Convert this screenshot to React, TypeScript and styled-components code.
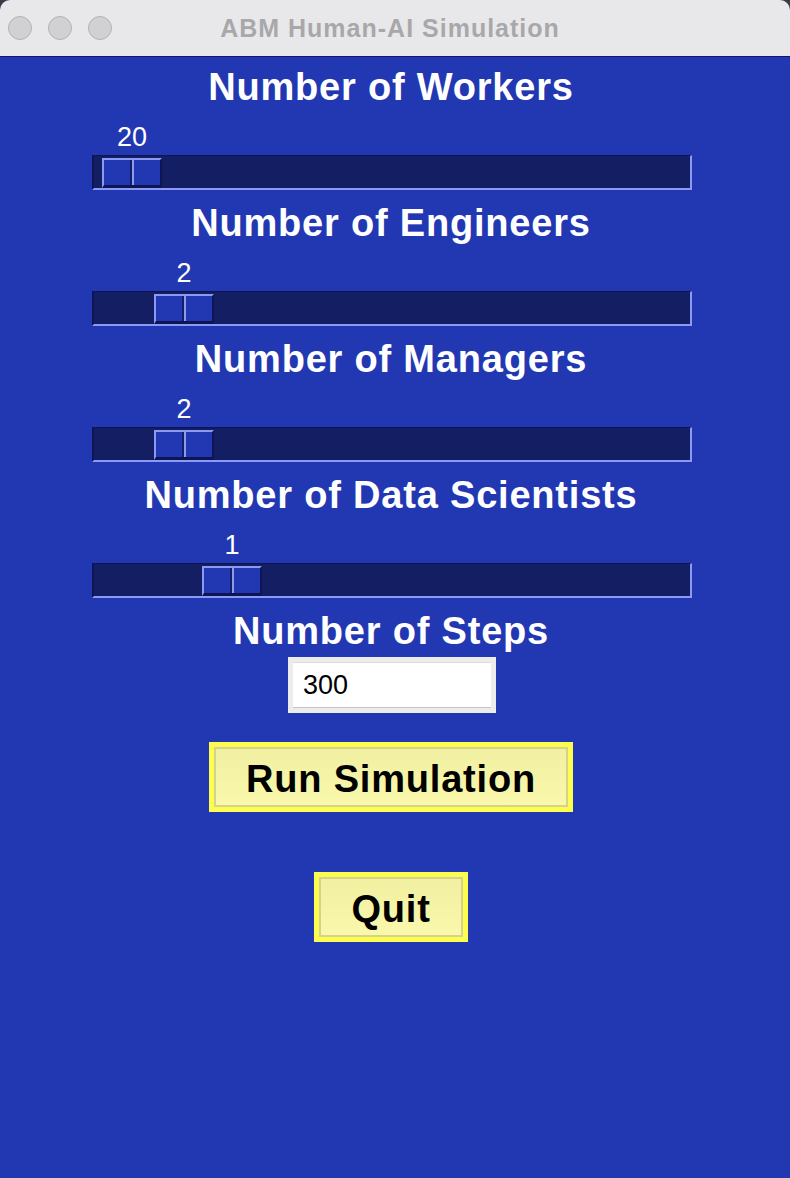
import React from "react";
import styled, { createGlobalStyle } from "styled-components";

const GlobalStyle = createGlobalStyle`
  html, body {
    margin: 0;
    padding: 0;
    background: #3c3c3e;
  }
  body {
    font-family: "Liberation Sans", Arial, sans-serif;
  }
  * { box-sizing: border-box; }
`;

const BLUE = "#2238b3";
const TRACK = "#131e63";
const DARK = "#0e1552";
const LIGHT = "#8b9bf4";

const Window = styled.div`
  display: flex;
  flex-direction: column;
  min-height: 1178px;
  background: ${BLUE};
  border-radius: 10px 10px 0 0;
  overflow: hidden;
`;

const TitleBar = styled.div`
  display: grid;
  grid-template-columns: 1fr auto 1fr;
  align-items: center;
  height: 57px;
  background: #e8e8ea;
  border-bottom: 1px solid #11186b;
`;

const Lights = styled.div`
  display: flex;
  gap: 16px;
  padding-left: 8px;
`;

const Light = styled.span`
  width: 24px;
  height: 24px;
  border-radius: 50%;
  background: #d1d1d3;
  border: 1px solid #b3b3b5;
`;

const WindowTitle = styled.div`
  font-family: "Liberation Sans", Arial, sans-serif;
  font-weight: bold;
  font-size: 25px;
  letter-spacing: 1px;
  color: #a8a8aa;
  margin-right: 10px;
`;

const Content = styled.div`
  display: flex;
  flex-direction: column;
  align-items: center;
  padding: 4px 8px 0 0;
`;

const SliderBlock = styled.section`
  display: flex;
  flex-direction: column;
  align-items: center;
  align-self: stretch;
  margin-bottom: 7px;
`;

const Heading = styled.h2`
  margin: 0;
  padding-top: 4px;
  font-family: "Liberation Sans", Arial, sans-serif;
  font-weight: bold;
  font-size: 38px;
  letter-spacing: 0.8px;
  line-height: 44px;
  color: #ffffff;
`;

const SliderGroup = styled.div`
  display: flex;
  flex-direction: column;
  align-self: flex-start;
  margin-left: 92px;
  width: 600px;
`;

const ValueLabel = styled.div<{ $offset: number }>`
  margin-top: 13px;
  margin-left: ${(p) => p.$offset + 2}px;
  width: 60px;
  height: 30px;
  line-height: 30px;
  text-align: center;
  font-family: "Liberation Sans", Arial, sans-serif;
  font-size: 27px;
  color: #ffffff;
`;

const Track = styled.div`
  margin-top: 3px;
  height: 35px;
  display: flex;
  align-items: flex-start;
  background: ${TRACK};
  border-top: 1px solid ${DARK};
  border-left: 2px solid ${DARK};
  border-bottom: 2px solid ${LIGHT};
  border-right: 2px solid ${LIGHT};
`;

const Thumb = styled.div<{ $offset: number }>`
  display: flex;
  margin-top: 2px;
  margin-left: ${(p) => p.$offset}px;
  width: 60px;
  height: 30px;
  border-top: 2px solid ${LIGHT};
  border-left: 2px solid ${LIGHT};
  border-right: 2px solid ${DARK};
  border-bottom: 3px solid ${DARK};
`;

const ThumbCell = styled.div<{ $second?: boolean }>`
  flex: 1;
  background: ${BLUE};
  ${(p) =>
    p.$second
      ? `border-left: 2px solid ${LIGHT};`
      : `border-right: 2px solid ${TRACK};`}
`;

const Entry = styled.div`
  margin-top: 4px;
  margin-left: 2px;
  width: 208px;
  height: 56px;
  padding: 5px;
  background: #ececec;
`;

const EntryInput = styled.input`
  display: block;
  width: 100%;
  height: 100%;
  margin: 0;
  padding: 0 0 0 10px;
  border: none;
  border-top: 1px solid #dcdcdc;
  border-bottom: 1px solid #c4c4c4;
  background: #ffffff;
  color: #000000;
  outline: none;
  font-family: "Liberation Sans", Arial, sans-serif;
  font-size: 27px;
`;

const ActionButton = styled.button<{ $gap: number }>`
  display: flex;
  align-items: center;
  justify-content: center;
  margin-top: ${(p) => p.$gap}px;
  height: 70px;
  padding: 4px 32px 0;
  border: 5px solid #fdfd4f;
  box-shadow: inset 0 0 0 2px #d5d28a;
  background: linear-gradient(#f1efa0, #f9f8ac);
  color: #000000;
  font-family: "Liberation Sans", Arial, sans-serif;
  font-weight: bold;
  font-size: 38px;
  letter-spacing: 0.8px;
  cursor: pointer;
`;

const sliders = [
  { label: "Number of Workers", value: 20, offset: 8 },
  { label: "Number of Engineers", value: 2, offset: 60 },
  { label: "Number of Managers", value: 2, offset: 60 },
  { label: "Number of Data Scientists", value: 1, offset: 108 },
];

export default function App() {
  return (
    <>
      <GlobalStyle />
      <Window>
        <TitleBar>
          <Lights>
            <Light />
            <Light />
            <Light />
          </Lights>
          <WindowTitle>ABM Human-AI Simulation</WindowTitle>
          <div />
        </TitleBar>
        <Content>
          {sliders.map((s) => (
            <SliderBlock key={s.label}>
              <Heading>{s.label}</Heading>
              <SliderGroup>
                <ValueLabel $offset={s.offset}>{s.value}</ValueLabel>
                <Track>
                  <Thumb $offset={s.offset}>
                    <ThumbCell />
                    <ThumbCell $second />
                  </Thumb>
                </Track>
              </SliderGroup>
            </SliderBlock>
          ))}
          <Heading>Number of Steps</Heading>
          <Entry>
            <EntryInput defaultValue="300" />
          </Entry>
          <ActionButton $gap={29}>Run Simulation</ActionButton>
          <ActionButton $gap={60}>Quit</ActionButton>
        </Content>
      </Window>
    </>
  );
}
